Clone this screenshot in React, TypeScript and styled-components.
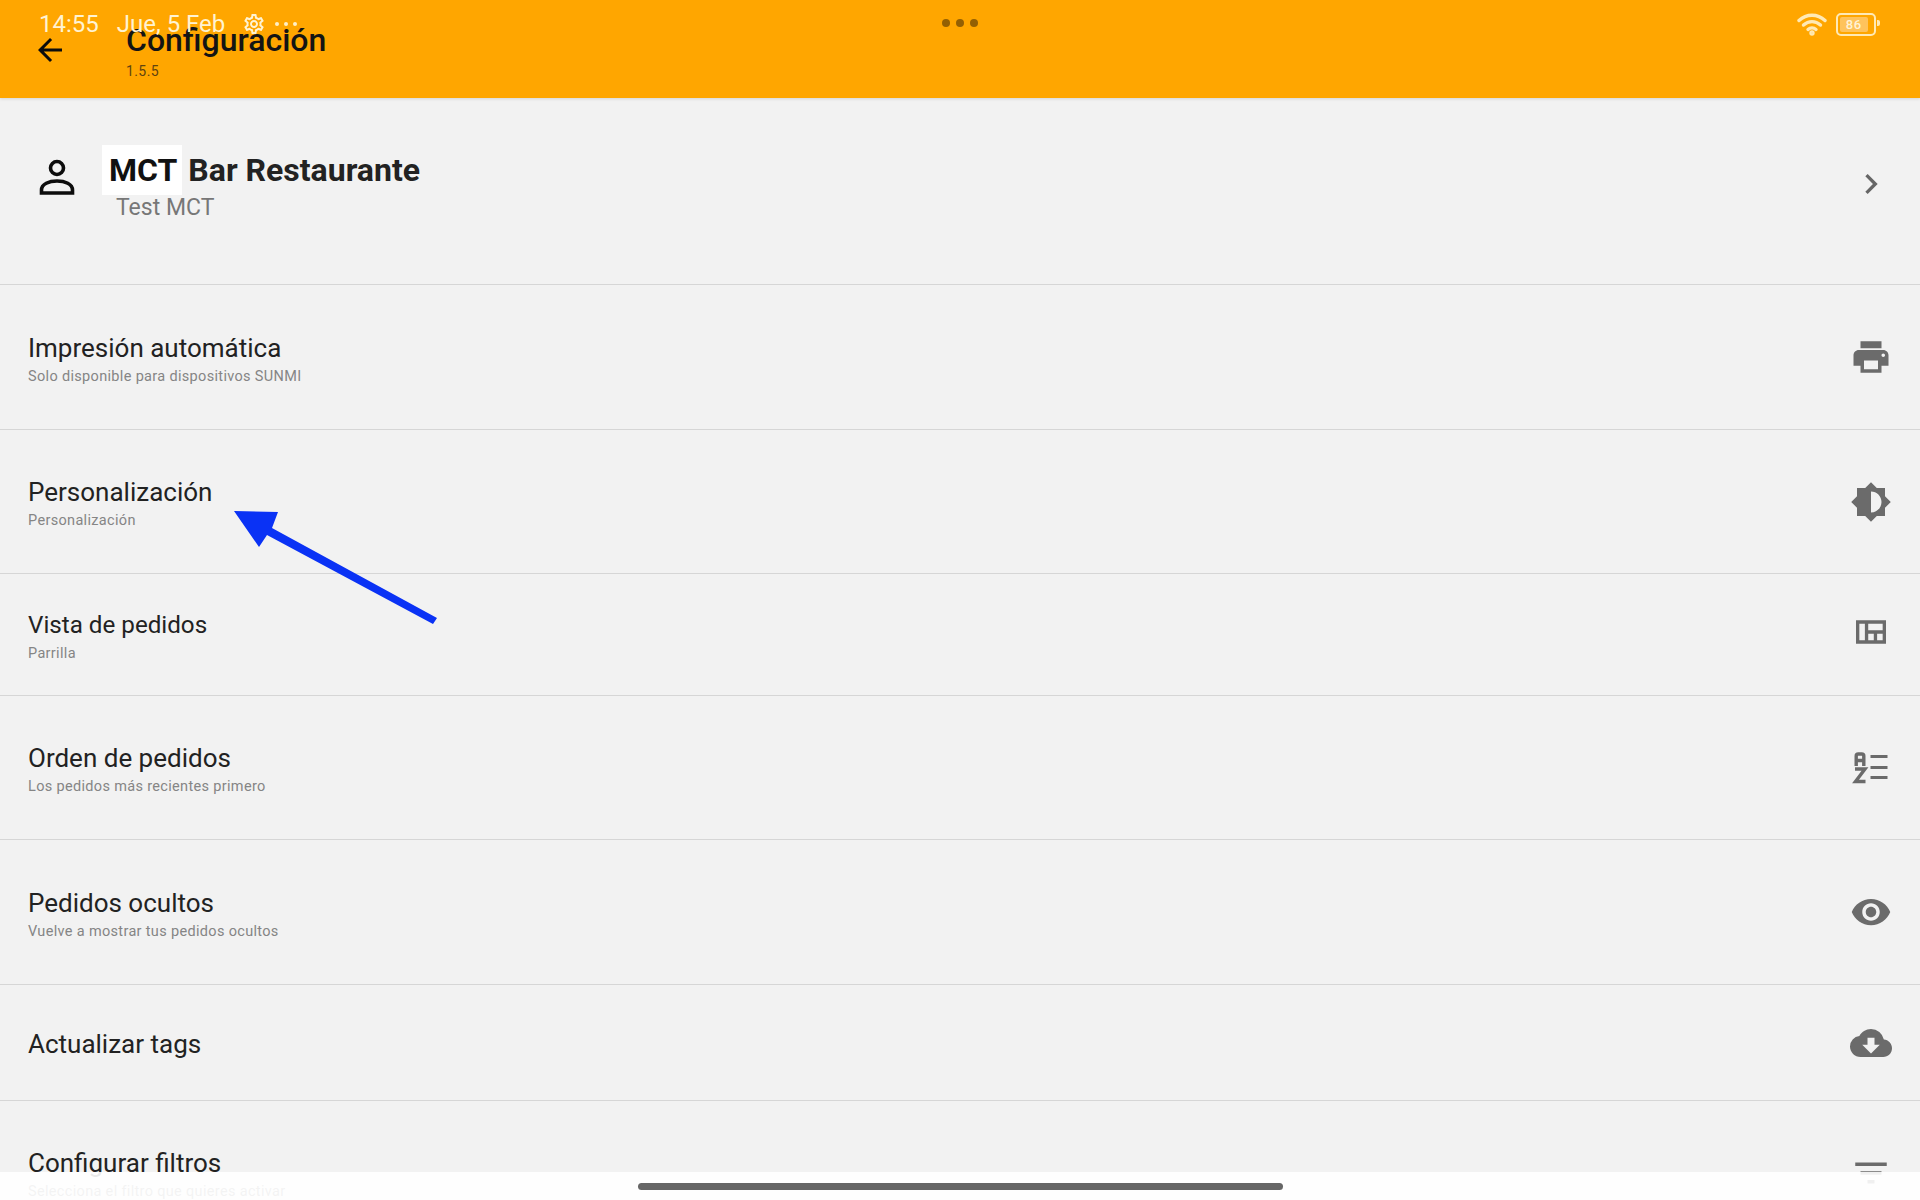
import { ReactNode } from "react";
import styled, { createGlobalStyle } from "styled-components";
import {
  MdArrowBack,
  MdBrightness6,
  MdChevronRight,
  MdCloudDownload,
  MdFilterList,
  MdOutlineSettings,
  MdOutlineViewQuilt,
  MdPrint,
  MdVisibility,
} from "react-icons/md";

const GlobalStyle = createGlobalStyle`
  html, body {
    margin: 0;
    padding: 0;
    background: #f2f2f2;
    font-family: Roboto, "Liberation Sans", sans-serif;
  }
`;

const Screen = styled.div`
  position: relative;
  width: 1920px;
  height: 1200px;
  overflow: hidden;
  background: #f2f2f2;
`;

const Header = styled.header`
  height: 98px;
  box-sizing: border-box;
  display: flex;
  align-items: flex-start;
  background: #ffa600;
  color: #111;
  box-shadow: 0 1px 3px rgba(0, 0, 0, 0.12);
  padding: 32px 0 0 32px;
`;

const BackButton = styled.div`
  width: 36px;
  height: 36px;
  font-size: 36px;
  line-height: 0;
  color: #0c0c0c;
`;

const HeaderText = styled.div`
  margin-left: 58px;
  margin-top: -10px;
`;

const HeaderTitle = styled.div`
  font-size: 32px;
  font-weight: 500;
  line-height: 36px;
  color: #141414;
`;

const Version = styled.div`
  font-size: 14px;
  line-height: 16px;
  margin-top: 5px;
  letter-spacing: 0.4px;
  color: #5f4410;
`;

const StatusBar = styled.div`
  position: absolute;
  top: 10px;
  left: 39px;
  right: 40px;
  height: 28px;
  display: flex;
  align-items: center;
  justify-content: space-between;
  color: #fff3d2;
  font-size: 24px;
`;

const StatusLeft = styled.div`
  display: flex;
  align-items: center;
`;

const StatusDate = styled.span`
  margin-left: 18px;
`;

const StatusGear = styled.span`
  margin-left: 17px;
  font-size: 24px;
  line-height: 0;
`;

const StatusMore = styled.span`
  margin-left: 9px;
  display: flex;
  gap: 5px;
`;

const TinyDot = styled.i`
  width: 4px;
  height: 4px;
  border-radius: 50%;
  background: #fff0c8;
`;

const StatusRight = styled.div`
  display: flex;
  align-items: center;
  gap: 9px;
`;

const BatteryBox = styled.div`
  position: relative;
  width: 32px;
  height: 15px;
  border: 2px solid #ffe9b5;
  border-radius: 5px;
  padding: 2px;
  box-sizing: content-box;
  margin-right: 4px;
  &::after {
    content: "";
    position: absolute;
    right: -6px;
    top: 5px;
    width: 3px;
    height: 6px;
    border-radius: 0 2px 2px 0;
    background: #ffe9b5;
  }
`;

const BatteryLevel = styled.div`
  height: 100%;
  width: 86%;
  background: #ffc35c;
  border-radius: 2px;
  font-size: 13px;
  font-weight: 500;
  line-height: 15px;
  text-align: center;
  color: #fff3d6;
  letter-spacing: 0.5px;
`;

const WindowDots = styled.div`
  position: absolute;
  top: 19px;
  left: 942px;
  display: flex;
  gap: 6px;
`;

const WindowDot = styled.i`
  width: 8px;
  height: 8px;
  border-radius: 50%;
  background: #935f03;
`;

const ProfileRow = styled.div`
  height: 187px;
  box-sizing: border-box;
  display: flex;
  align-items: flex-start;
  border-bottom: 1px solid #d6d6d6;
  padding: 47px 28px 0 37px;
`;

const ProfileIcon = styled.svg`
  width: 40px;
  height: 40px;
  margin-top: 13px;
`;

const ProfileText = styled.div`
  margin-left: 25px;
  flex: 1;
`;

const ProfileName = styled.div`
  display: flex;
  align-items: center;
  font-size: 32px;
  font-weight: 700;
  color: #222;
  line-height: 50px;
`;

const Highlight = styled.span`
  background: #fff;
  color: #111;
  padding: 0 5px 0 7px;
  margin-right: 6px;
`;

const ProfileSub = styled.div`
  font-size: 23px;
  line-height: 28px;
  color: #777;
  margin-left: 14px;
  margin-top: -1px;
`;

const ProfileChevron = styled.div`
  font-size: 40px;
  line-height: 0;
  margin-top: 19px;
  margin-right: 1px;
  color: #666;
`;

const Row = styled.div<{ $height: number }>`
  height: ${({ $height }) => $height}px;
  box-sizing: border-box;
  display: flex;
  align-items: center;
  justify-content: space-between;
  padding: 0 27px 0 28px;
  border-bottom: 1px solid #d6d6d6;
`;

const RowText = styled.div<{ $withSub: boolean }>`
  padding-top: ${({ $withSub }) => ($withSub ? 4 : 3)}px;
`;

const RowTitle = styled.div<{ $small?: boolean }>`
  font-size: ${({ $small }) => ($small ? 24.2 : 26)}px;
  line-height: 32px;
  color: #222;
`;

const RowSub = styled.div`
  font-size: 14.5px;
  line-height: 20px;
  margin-top: 3px;
  letter-spacing: 0.33px;
  color: #858585;
`;

const RowIcon = styled.div<{ $size?: number; $lift?: number }>`
  width: 44px;
  height: 44px;
  margin-bottom: ${({ $lift }) => $lift ?? 0}px;
  display: flex;
  align-items: center;
  justify-content: center;
  font-size: ${({ $size }) => $size ?? 42}px;
  line-height: 0;
  color: #6b6b6b;
`;

const NavOverlay = styled.div`
  position: absolute;
  left: 0;
  right: 0;
  bottom: 0;
  height: 28px;
  display: flex;
  justify-content: center;
  padding-top: 11px;
  box-sizing: border-box;
  background: rgba(255, 255, 255, 0.9);
`;

const NavHandle = styled.div`
  width: 645px;
  height: 7px;
  border-radius: 4px;
  background: #666;
`;

const ArrowMark = styled.svg`
  position: absolute;
  left: 220px;
  top: 500px;
  width: 230px;
  height: 130px;
`;

function AlphaListIcon() {
  return (
    <svg width="40" height="40" viewBox="0 0 40 40" fill="none" stroke="currentColor" strokeWidth="3.4">
      <path d="M5.200 18V8a2 2 0 0 1 2-2h3.600a2 2 0 0 1 2 2V18M5.200 12.500h7.600" />
      <path d="M4 21h10L4.500 33.500H14.500" />
      <path d="M19.500 8.500h17M19.500 19.500h17M19.500 29.500h17" strokeWidth="3" />
    </svg>
  );
}

type SettingItem = {
  title: string;
  sub?: string;
  height: number;
  icon: ReactNode;
  iconSize?: number;
  iconLift?: number;
  small?: boolean;
};

const items: SettingItem[] = [
  { title: "Impresión automática", sub: "Solo disponible para dispositivos SUNMI", height: 145, icon: <MdPrint /> },
  { title: "Personalización", sub: "Personalización", height: 144, icon: <MdBrightness6 /> },
  {
    title: "Vista de pedidos",
    sub: "Parrilla",
    height: 122,
    icon: <MdOutlineViewQuilt />,
    iconSize: 40,
    iconLift: 6,
    small: true,
  },
  { title: "Orden de pedidos", sub: "Los pedidos más recientes primero", height: 144, icon: <AlphaListIcon /> },
  { title: "Pedidos ocultos", sub: "Vuelve a mostrar tus pedidos ocultos", height: 145, icon: <MdVisibility /> },
  { title: "Actualizar tags", height: 116, icon: <MdCloudDownload /> },
  { title: "Configurar filtros", sub: "Selecciona el filtro que quieres activar", height: 144, icon: <MdFilterList /> },
];

export default function App() {
  return (
    <Screen>
      <GlobalStyle />
      <Header>
        <BackButton>
          <MdArrowBack />
        </BackButton>
        <HeaderText>
          <HeaderTitle>Configuración</HeaderTitle>
          <Version>1.5.5</Version>
        </HeaderText>
      </Header>

      <ProfileRow>
        <ProfileIcon viewBox="0 0 40 40" fill="none" stroke="#0d0d0d" strokeWidth="3.6">
          <circle cx="20" cy="10" r="6.500" />
          <path d="M4.500 35v-3c0-6 7.500-9 15.500-9s15.500 3 15.500 9v3z" />
        </ProfileIcon>
        <ProfileText>
          <ProfileName>
            <Highlight>MCT</Highlight>
            Bar Restaurante
          </ProfileName>
          <ProfileSub>Test MCT</ProfileSub>
        </ProfileText>
        <ProfileChevron>
          <MdChevronRight />
        </ProfileChevron>
      </ProfileRow>

      {items.map((item) => (
        <Row key={item.title} $height={item.height}>
          <RowText $withSub={Boolean(item.sub)}>
            <RowTitle $small={item.small}>{item.title}</RowTitle>
            {item.sub && <RowSub>{item.sub}</RowSub>}
          </RowText>
          <RowIcon $size={item.iconSize} $lift={item.iconLift}>
            {item.icon}
          </RowIcon>
        </Row>
      ))}

      <StatusBar>
        <StatusLeft>
          <span>14:55</span>
          <StatusDate>Jue, 5 Feb</StatusDate>
          <StatusGear>
            <MdOutlineSettings />
          </StatusGear>
          <StatusMore>
            <TinyDot />
            <TinyDot />
            <TinyDot />
          </StatusMore>
        </StatusLeft>
        <StatusRight>
          <svg width="30" height="24" viewBox="0 0 30 24" fill="none" stroke="#ffe9b5" strokeWidth="3.4" strokeLinecap="round">
            <path d="M2 8.500C9.500 1.500 20.500 1.500 28 8.500" />
            <path d="M6.500 13C11.500 8.500 18.500 8.500 23.500 13" />
            <path d="M11 17.500c2.300-2 5.700-2 8 0" />
            <circle cx="15" cy="21" r="1" fill="#ffe9b5" />
          </svg>
          <BatteryBox>
            <BatteryLevel>86</BatteryLevel>
          </BatteryBox>
        </StatusRight>
      </StatusBar>

      <WindowDots>
        <WindowDot />
        <WindowDot />
        <WindowDot />
      </WindowDots>

      <ArrowMark viewBox="220 500 230 130">
        <polygon points="234,511 278,512 272,528 437,618 433,624 267,535 259,547" fill="#0a32f5" />
      </ArrowMark>

      <NavOverlay>
        <NavHandle />
      </NavOverlay>
    </Screen>
  );
}
